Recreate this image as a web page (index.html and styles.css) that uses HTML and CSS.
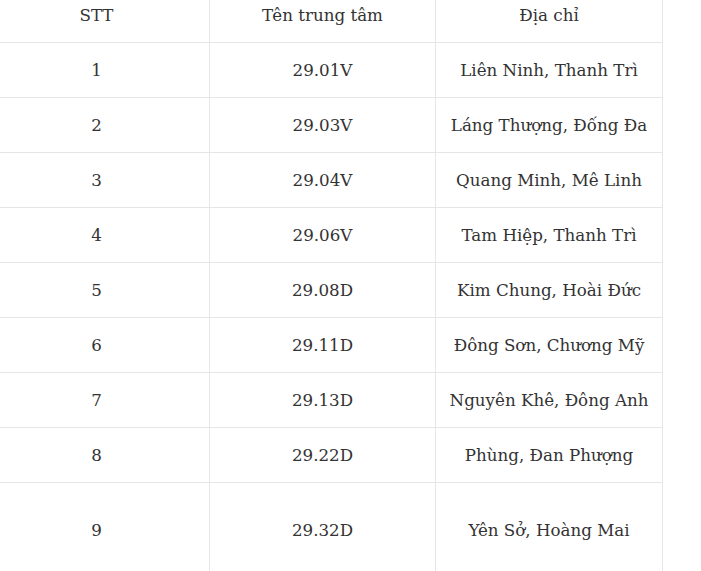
FILE: index.html
```html
<!DOCTYPE html>
<html lang="vi">
<head>
<meta charset="utf-8">
<link rel="stylesheet" href="styles.css">
</head>
<body>
<table class="centers">
  <thead>
    <tr><th>STT</th><th>Tên trung tâm</th><th>Địa chỉ</th></tr>
  </thead>
  <tbody>
    <tr><td>1</td><td>29.01V</td><td>Liên Ninh, Thanh Trì</td></tr>
    <tr><td>2</td><td>29.03V</td><td>Láng Thượng, Đống Đa</td></tr>
    <tr><td>3</td><td>29.04V</td><td>Quang Minh, Mê Linh</td></tr>
    <tr><td>4</td><td>29.06V</td><td>Tam Hiệp, Thanh Trì</td></tr>
    <tr><td>5</td><td>29.08D</td><td>Kim Chung, Hoài Đức</td></tr>
    <tr><td>6</td><td>29.11D</td><td>Đông Sơn, Chương Mỹ</td></tr>
    <tr><td>7</td><td>29.13D</td><td>Nguyên Khê, Đông Anh</td></tr>
    <tr><td>8</td><td>29.22D</td><td>Phùng, Đan Phượng</td></tr>
    <tr class="last"><td>9</td><td>29.32D</td><td>Yên Sở, Hoàng Mai</td></tr>
  </tbody>
</table>
</body>
</html>
```
FILE: styles.css
```css
html, body {
  margin: 0;
  padding: 0;
  background: #ffffff;
  overflow: hidden;
}
.centers {
  border-collapse: collapse;
  margin: -13px 0 0 -17px;
  font-family: "DejaVu Serif", "Liberation Serif", serif;
  font-size: 16.7px;
  color: #333333;
  table-layout: fixed;
  width: 676px;
}
.centers th,
.centers td {
  border: 1px solid #e6e6e6;
  text-align: center;
  vertical-align: middle;
  font-weight: normal;
  height: 54px;
  padding: 0;
}
.centers th:nth-child(1), .centers td:nth-child(1) { width: 225px; }
.centers th:nth-child(2), .centers td:nth-child(2) { width: 225px; }
.centers th:nth-child(3), .centers td:nth-child(3) { width: 226px; }
.centers .last td {
  height: 93px;
}
```
